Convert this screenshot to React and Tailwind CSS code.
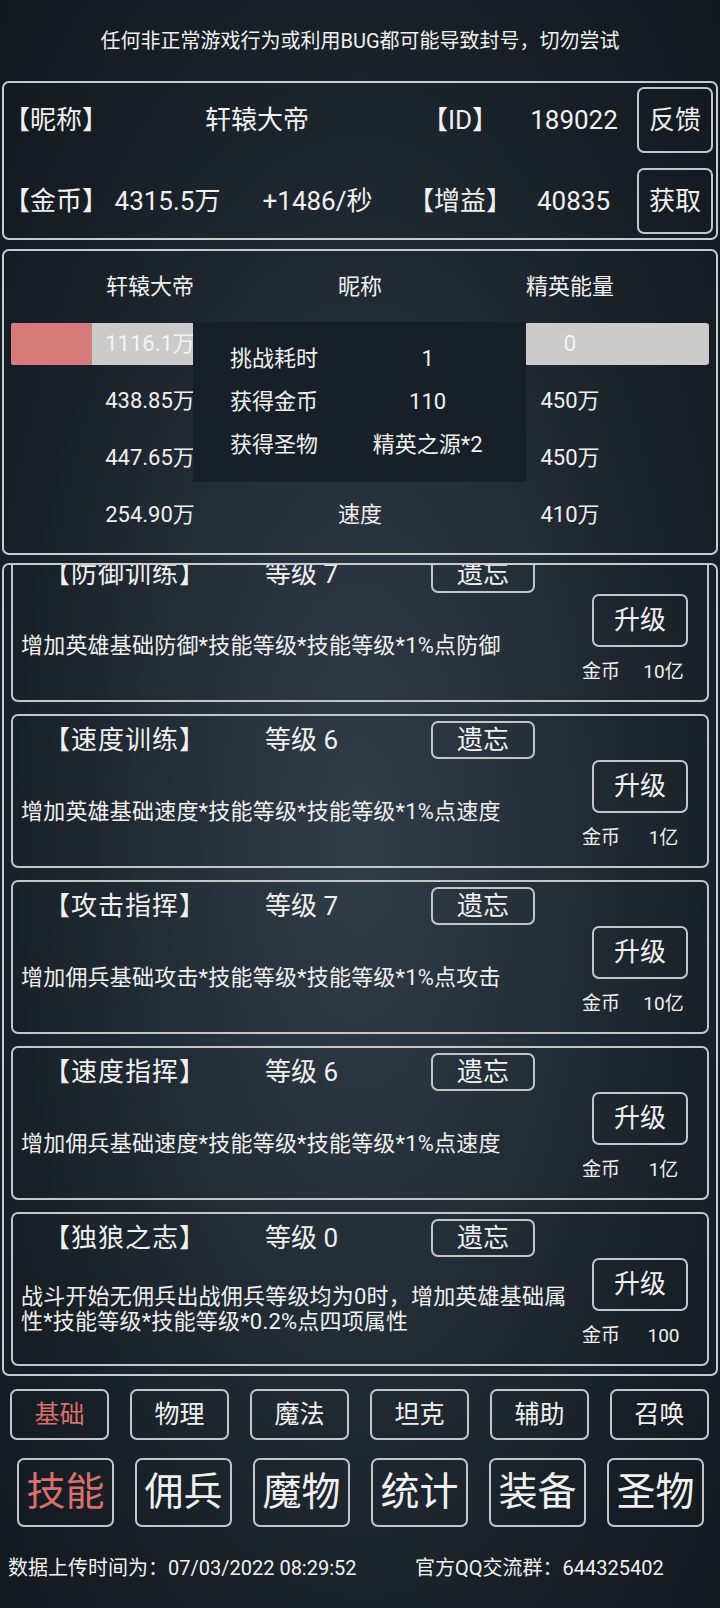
import React from "react";

const skills = [
  { name: "【防御训练】", lv: 7, desc: "增加英雄基础防御*技能等级*技能等级*1%点防御", cost: "10亿" },
  { name: "【速度训练】", lv: 6, desc: "增加英雄基础速度*技能等级*技能等级*1%点速度", cost: "1亿" },
  { name: "【攻击指挥】", lv: 7, desc: "增加佣兵基础攻击*技能等级*技能等级*1%点攻击", cost: "10亿" },
  { name: "【速度指挥】", lv: 6, desc: "增加佣兵基础速度*技能等级*技能等级*1%点速度", cost: "1亿" },
  { name: "【独狼之志】", lv: 0, desc: "战斗开始无佣兵出战佣兵等级均为0时，增加英雄基础属性*技能等级*技能等级*0.2%点四项属性", cost: "100" },
];

const tabs1 = ["基础", "物理", "魔法", "坦克", "辅助", "召唤"];
const tabs2 = ["技能", "佣兵", "魔物", "统计", "装备", "圣物"];

function SkillCard({ s }) {
  return (
    <div className="h-[154px] shrink-0 flex border-2 border-[#c3c6c9] rounded-[7px]">
      <div className="flex-1 flex flex-col">
        <div className="h-[48px] flex items-center whitespace-nowrap">
          <div className="w-[224px] text-center text-[26px] tracking-[1px]">{s.name}</div>
          <div className="w-[194px] pl-[28px] text-[26px]">等级 {s.lv}</div>
          <div className="w-[104px] h-[38px] border-2 border-[#c3c6c9] rounded-[7px] flex items-center justify-center text-[26px]">遗忘</div>
        </div>
        <div className="h-[94px] flex items-center pl-[8px] text-[22px] leading-[25px] tracking-[0.2px]">
          <div>{s.desc}</div>
        </div>
      </div>
      <div className="w-[135px] flex flex-col pt-[44px]">
        <div className="ml-[20px] w-[96px] h-[53px] border-2 border-[#c3c6c9] rounded-[7px] flex items-center justify-center text-[26px]">升级</div>
        <div className="mt-[13px] h-[24px] flex items-center text-[19px] whitespace-nowrap">
          <div className="ml-[10px] w-[38px]">金币</div>
          <div className="w-[87px] text-center">{s.cost}</div>
        </div>
      </div>
    </div>
  );
}

export default function App() {
  return (
    <div
      className="w-[720px] h-[1608px] flex flex-col text-[#f0f0f0] bg-[radial-gradient(ellipse_at_50%_52%,#313d49_0%,#232d36_40%,#171e25_75%,#12181e_100%)] overflow-hidden"
      style={{ fontFamily: '"Roboto", "Noto Sans CJK SC", sans-serif' }}
    >
      <div className="h-[81px] flex items-center justify-center text-[20px]">
        任何非正常游戏行为或利用BUG都可能导致封号，切勿尝试
      </div>

      {/* Panel 1 */}
      <div className="mx-[2px] h-[159px] border-2 border-[#c8cbce] rounded-[7px] flex flex-col pt-[4px] gap-[15px] text-[26px] whitespace-nowrap">
        <div className="h-[66px] flex items-center">
          <div className="w-[104px] text-center">【昵称】</div>
          <div className="w-[298px] text-center">轩辕大帝</div>
          <div className="w-[108px] text-center">【ID】</div>
          <div className="w-[120px] text-center">189022</div>
          <div className="ml-auto mr-[3px] w-[76px] h-[66px] border-2 border-[#c3c6c9] rounded-[7px] flex items-center justify-center">反馈</div>
        </div>
        <div className="h-[66px] flex items-center">
          <div className="w-[104px] text-center">【金币】</div>
          <div className="w-[119px] text-center">4315.5万</div>
          <div className="w-[181px] text-center">+1486/秒</div>
          <div className="w-[102px] text-center">【增益】</div>
          <div className="w-[127px] text-center">40835</div>
          <div className="ml-auto mr-[3px] w-[76px] h-[66px] border-2 border-[#c3c6c9] rounded-[7px] flex items-center justify-center">获取</div>
        </div>
      </div>

      {/* Panel 2 */}
      <div className="relative mt-[9px] mx-[2px] h-[306px] border-2 border-[#c8cbce] rounded-[7px] pt-[7px] text-[22px] whitespace-nowrap">
        <div className="grid grid-cols-[292px_128px_292px]">
          <div className="h-[57px] flex items-center justify-center">轩辕大帝</div>
          <div className="h-[57px] flex items-center justify-center">昵称</div>
          <div className="h-[57px] flex items-center justify-center">精英能量</div>

          <div className="h-[57px] flex items-center pl-[7px] pr-[7px]">
            <div className="relative w-full h-[42px] bg-[#cbcbcb] rounded-[3px] overflow-hidden">
              <div className="w-[81px] h-full bg-[#d67b7b]"></div>
              <div className="absolute inset-0 flex items-center justify-center text-[#f4f4f4]">1116.1万</div>
            </div>
          </div>
          <div className="h-[57px]"></div>
          <div className="h-[57px] flex items-center px-[7px]">
            <div className="w-full h-[42px] bg-[#cbcbcb] rounded-[3px] flex items-center justify-center text-[#f4f4f4]">0</div>
          </div>

          <div className="h-[57px] flex items-center justify-center">438.85万</div>
          <div className="h-[57px]"></div>
          <div className="h-[57px] flex items-center justify-center">450万</div>

          <div className="h-[57px] flex items-center justify-center">447.65万</div>
          <div className="h-[57px]"></div>
          <div className="h-[57px] flex items-center justify-center">450万</div>

          <div className="h-[57px] flex items-center justify-center">254.90万</div>
          <div className="h-[57px] flex items-center justify-center">速度</div>
          <div className="h-[57px] flex items-center justify-center">410万</div>
        </div>

        <div className="absolute left-[189px] top-[71px] w-[333px] h-[160px] bg-[#172029] pt-[15px] pl-[37px]">
          {[["挑战耗时", "1"], ["获得金币", "110"], ["获得圣物", "精英之源*2"]].map(([k, v]) => (
            <div key={k} className="h-[43px] flex items-center">
              <div className="w-[100px]">{k}</div>
              <div className="w-[198px] text-center">{v}</div>
            </div>
          ))}
        </div>
      </div>

      {/* Panel 3: skills list */}
      <div className="mt-[8px] mx-[2px] h-[813px] border-2 border-[#c8cbce] rounded-[7px] overflow-hidden px-[7px]">
        <div className="-mt-[17px] flex flex-col gap-[12px]">
          {skills.map((s) => (
            <SkillCard key={s.name} s={s} />
          ))}
        </div>
      </div>

      {/* Tabs row 1 */}
      <div className="mt-[13px] pl-[10px] flex gap-[21px]">
        {tabs1.map((t, i) => (
          <div
            key={t}
            className={
              "w-[99px] h-[51px] border-2 border-[#c3c6c9] rounded-[7px] flex items-center justify-center text-[25px] " +
              (i === 0 ? "text-[#d9706c]" : "")
            }
          >
            {t}
          </div>
        ))}
      </div>

      {/* Tabs row 2 */}
      <div className="mt-[18px] pl-[17px] flex gap-[21px]">
        {tabs2.map((t, i) => (
          <div
            key={t}
            className={
              "w-[97px] h-[69px] border-2 border-[#c3c6c9] rounded-[7px] flex items-center justify-center text-[39px] " +
              (i === 0 ? "text-[#d9706c]" : "")
            }
          >
            {t}
          </div>
        ))}
      </div>

      {/* Footer */}
      <div className="mt-[26px] h-[30px] pl-[8px] flex items-center text-[20px] whitespace-nowrap">
        <div className="w-[407px]">数据上传时间为：07/03/2022 08:29:52</div>
        <div>官方QQ交流群：644325402</div>
      </div>
    </div>
  );
}
